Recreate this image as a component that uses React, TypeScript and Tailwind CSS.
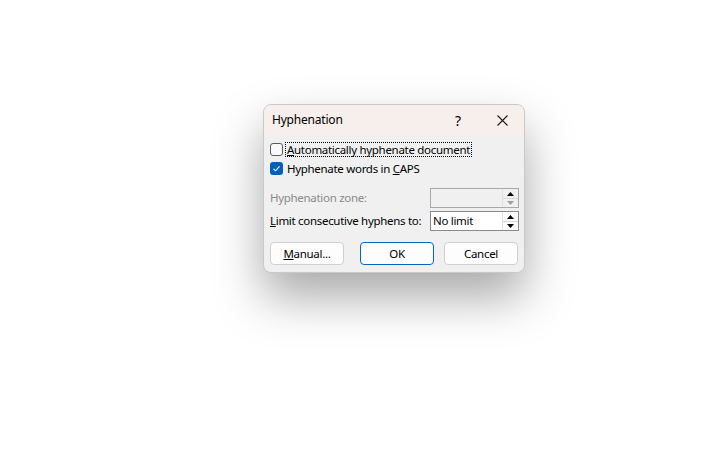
import React from 'react';

const font = { fontFamily: '"Noto Sans", "Open Sans", sans-serif' };

const Check = ({ checked }: { checked?: boolean }) =>
  checked ? (
    <span className="flex h-[13px] w-[13px] shrink-0 items-center justify-center rounded-[3px] bg-[#005fb8]">
      <svg width="9" height="9" viewBox="0 0 9 9" fill="none">
        <path d="M1.5 4.8 L3.6 6.8 L7.5 2.4" stroke="white" strokeWidth="1.1" />
      </svg>
    </span>
  ) : (
    <span className="h-[13px] w-[13px] shrink-0 rounded-[3px] border border-[#5a5a5a] bg-[#fafafa]" />
  );

const Spin = ({ disabled }: { disabled?: boolean }) => (
  <div className="flex w-[16px] flex-col border-l border-[#e0e0e0]">
    <div className="flex h-1/2 items-center justify-center">
      <svg width="7" height="4" viewBox="0 0 7 4">
        <path d="M0 4 L3.5 0 L7 4 Z" fill="#000" />
      </svg>
    </div>
    <div className="flex h-1/2 items-center justify-center border-t border-[#d8d8d8]">
      <svg width="7" height="4" viewBox="0 0 7 4">
        <path d="M0 0 L3.5 4 L7 0 Z" fill={disabled ? '#a0a0a0' : '#000'} />
      </svg>
    </div>
  </div>
);

const Btn = ({ children, primary }: { children: React.ReactNode; primary?: boolean }) => (
  <button
    className={
      primary
        ? 'flex h-[23px] w-[74px] items-center justify-center rounded-[4px] border border-[#0067c0] bg-[#fdfdfd] text-black'
        : 'flex h-[23px] w-[74px] items-center justify-center rounded-[4px] border border-[#d0d0d0] bg-[#fdfdfd] text-black'
    }
  >
    {children}
  </button>
);

export default function App() {
  return (
    <div className="min-h-[458px] w-[713px] bg-white pl-[263px] pt-[104px]" style={font}>
      <div className="w-[262px] overflow-hidden rounded-[8px] border border-[#c9c9c9] bg-[#f0f0f0] shadow-[0_24px_48px_rgba(0,0,0,0.34)]">
        <div className="flex h-[30px] items-center bg-[#f6efeb] pl-[8px] text-[12px] tracking-[-0.2px] text-black">
          <span className="flex-1">Hyphenation</span>
          <span className="mr-[36px] text-[14px]">?</span>
          <svg className="mr-[16px]" width="11" height="11" viewBox="0 0 11 11">
            <path d="M0.5 0.5 L10.5 10.5 M10.5 0.5 L0.5 10.5" stroke="#1a1a1a" strokeWidth="1.1" />
          </svg>
        </div>
        <div className="flex flex-col whitespace-nowrap pb-[7px] pl-[6px] pr-[5px] pt-[7px] text-[11.5px] leading-[14px] tracking-[-0.3px] text-black">
          <div className="flex h-[15px] items-center gap-[2px]">
            <Check />
            <span className="border border-dotted border-black px-[1px] leading-[13px]">
              <u>A</u>utomatically hyphenate document
            </span>
          </div>
          <div className="mt-[4px] flex h-[15px] items-center gap-[4px]">
            <Check checked />
            <span>
              Hyphenate words in <u>C</u>APS
            </span>
          </div>
          <div className="mt-[12px] flex h-[20px] items-center">
            <span className="flex-1 text-[#8a8a8a]">Hyphenation zone:</span>
            <div className="flex h-[20px] w-[89px] border border-[#a8a8a8] bg-[#f0f0f0]">
              <div className="flex-1" />
              <Spin disabled />
            </div>
          </div>
          <div className="mt-[3px] flex h-[20px] items-center">
            <span className="flex-1">
              <u>L</u>imit consecutive hyphens to:
            </span>
            <div className="flex h-[20px] w-[89px] border border-[#8a8a8a] bg-white">
              <div className="flex flex-1 items-center pl-[2px]">No limit</div>
              <Spin />
            </div>
          </div>
          <div className="mt-[11px] flex items-center">
            <Btn>
              <u>M</u>anual...
            </Btn>
            <div className="ml-[16px]">
              <Btn primary>OK</Btn>
            </div>
            <div className="ml-[10px]">
              <Btn>Cancel</Btn>
            </div>
          </div>
        </div>
      </div>
    </div>
  );
}
